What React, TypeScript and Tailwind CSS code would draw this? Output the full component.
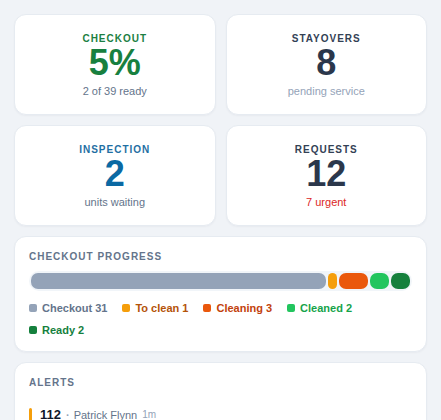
import React from "react";

type Stat = {
  label: string;
  value: string;
  sub: string;
  labelClass: string;
  valueClass: string;
  subClass: string;
};

const stats: Stat[] = [
  { label: "CHECKOUT", value: "5%", sub: "2 of 39 ready", labelClass: "text-[#1d7f43]", valueClass: "text-[#18803f]", subClass: "text-[#64748b]" },
  { label: "STAYOVERS", value: "8", sub: "pending service", labelClass: "text-[#334155]", valueClass: "text-[#2b374b]", subClass: "text-[#94a3b8]" },
  { label: "INSPECTION", value: "2", sub: "units waiting", labelClass: "text-[#1f6fa3]", valueClass: "text-[#0b69a3]", subClass: "text-[#64748b]" },
  { label: "REQUESTS", value: "12", sub: "7 urgent", labelClass: "text-[#334155]", valueClass: "text-[#2b374b]", subClass: "text-[#dc2626]" },
];

type Seg = { name: string; count: number; bar: string; text: string };

const segs: Seg[] = [
  { name: "Checkout", count: 31, bar: "bg-[#94a3b8]", text: "text-[#64748b]" },
  { name: "To clean", count: 1, bar: "bg-[#f59e0b]", text: "text-[#b45309]" },
  { name: "Cleaning", count: 3, bar: "bg-[#ea580c]", text: "text-[#c2410c]" },
  { name: "Cleaned", count: 2, bar: "bg-[#22c55e]", text: "text-[#16a34a]" },
  { name: "Ready", count: 2, bar: "bg-[#15803d]", text: "text-[#15803d]" },
];

const card = "bg-white rounded-[12px] border border-[#e6ebf1] shadow-[0_1px_2px_rgba(15,23,42,0.04)]";

function StatCard({ s }: { s: Stat }) {
  return (
    <div className={`${card} h-[101px] pt-[2px] flex flex-col items-center justify-center`}>
      <div className={`text-[10px] leading-[12px] font-bold tracking-[0.1em] ${s.labelClass}`}>{s.label}</div>
      <div className={`text-[36px] leading-[36px] font-bold ${s.valueClass}`}>{s.value}</div>
      <div className={`mt-[3px] text-[11px] leading-[14px] ${s.subClass}`}>{s.sub}</div>
    </div>
  );
}

export default function App() {
  return (
    <div className="min-h-screen bg-[#f0f3f7] p-[14px] font-['Liberation_Sans',Arial,sans-serif] flex flex-col gap-[10px]">
      <div className="grid grid-cols-2 gap-[10px]">
        {stats.map((s) => (
          <StatCard key={s.label} s={s} />
        ))}
      </div>

      <div className={`${card} p-[14px]`}>
        <div className="text-[10px] leading-[12px] font-bold tracking-[0.1em] text-[#64748b]">CHECKOUT PROGRESS</div>
        <div className="mt-[8px] h-[20px] rounded-full bg-[#f1f5f9] p-[2px] flex gap-[2px]">
          {segs.map((g) => (
            <div key={g.name} className={`h-full rounded-[7px] ${g.bar}`} style={{ flexGrow: g.count, flexBasis: 0 }} />
          ))}
        </div>
        <div className="mt-[10px] flex flex-wrap gap-x-[15px] gap-y-[8px]">
          {segs.map((g) => (
            <div key={g.name} className="flex items-center gap-[5px] h-[14px]">
              <span className={`w-[8px] h-[8px] rounded-[2px] ${g.bar}`} />
              <span className={`text-[11px] leading-[14px] font-bold ${g.text}`}>
                {g.name} {g.count}
              </span>
            </div>
          ))}
        </div>
      </div>

      <div className={`${card} p-[14px]`}>
        <div className="text-[10px] leading-[12px] font-bold tracking-[0.1em] text-[#64748b]">ALERTS</div>
        <div className="mt-[16px] flex flex-col gap-2">
          <div className="flex items-center h-[20px]">
            <span className="w-[3px] h-[18px] mt-[4px] rounded-full bg-[#f59e0b]" />
            <span className="ml-[8px] text-[13px] leading-[18px] font-bold text-[#0f172a]">112</span>
            <span className="ml-[5px] text-[11px] leading-[18px] font-bold text-[#94a3b8]">·</span>
            <span className="ml-[4px] text-[11px] leading-[18px] text-[#64748b]">Patrick Flynn</span>
            <span className="ml-[5px] text-[10px] leading-[18px] text-[#94a3b8]">1m</span>
          </div>
        </div>
      </div>
    </div>
  );
}
